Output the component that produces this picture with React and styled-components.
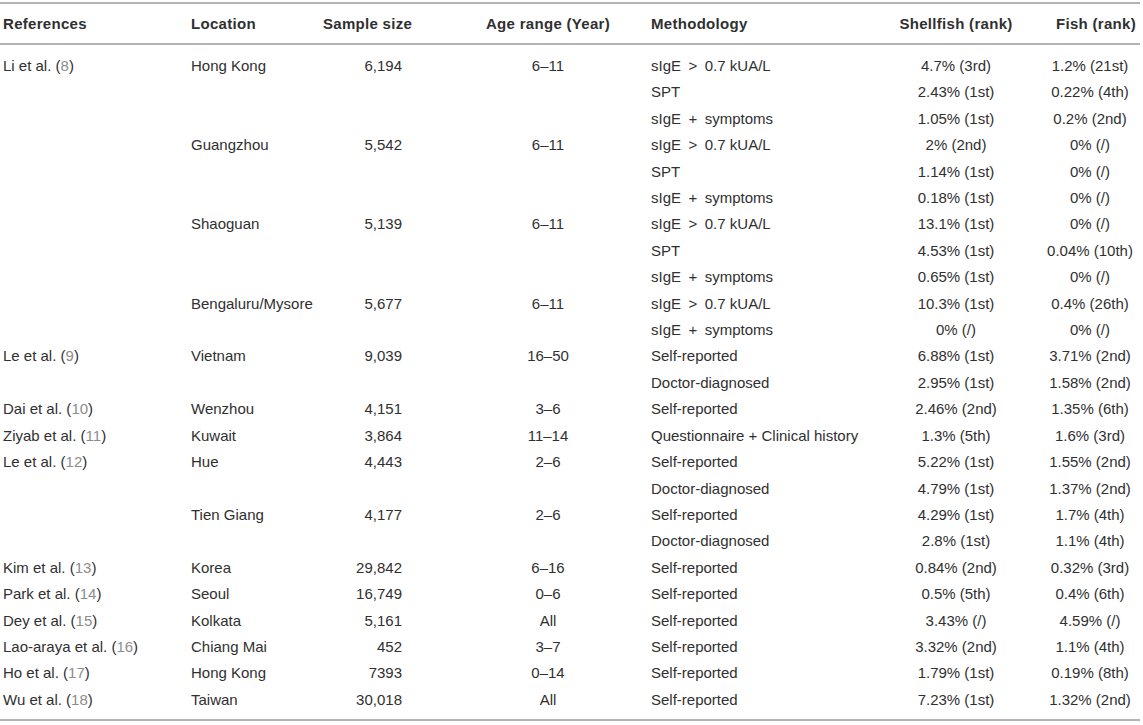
import React from "react";
import styled, { createGlobalStyle } from "styled-components";

const Global = createGlobalStyle`
  html, body { margin: 0; padding: 0; background: #ffffff; }
  body { font-family: "Liberation Sans", Arial, Helvetica, sans-serif; }
`;

const Table = styled.table`
  margin-top: 2px;
  width: 1140px;
  border-collapse: collapse;
  table-layout: fixed;
  border-top: 2px solid #b3b3b3;
  border-bottom: 2px solid #b3b3b3;
  color: #303030;
  font-size: 15px;
`;

const Th = styled.th`
  height: 39px;
  padding: 0 ${(p) => p.$pr || 3}px 0 3px;
  text-align: ${(p) => p.$align || "left"};
  font-weight: bold;
  letter-spacing: 0.3px;
  border-bottom: 2px solid #b3b3b3;
  white-space: nowrap;
  vertical-align: middle;
`;

const Td = styled.td`
  height: 26.4px;
  line-height: 26.4px;
  padding: ${(p) => (p.$first ? 8 : 0)}px ${(p) => p.$pr || 3}px
    ${(p) => (p.$last ? 6 : 0)}px 3px;
  text-align: ${(p) => p.$align || "left"};
  white-space: nowrap;
  vertical-align: top;
`;

const Cite = styled.span`
  color: #8c8c8c;
`;

const cols = [
  { w: 188, align: "left" },
  { w: 132, align: "left" },
  { w: 128, align: "right", pr: 46 },
  { w: 200, align: "center" },
  { w: 224, align: "left" },
  { w: 168, align: "center" },
  { w: 100, align: "center" },
];

const GT = "sIgE\u2002>\u20020.7 kUA/L";
const PS = "sIgE\u2002+\u2002symptoms";

const rows = [
  ["Li et al.", "8", "Hong Kong", "6,194", "6–11", GT, "4.7% (3rd)", "1.2% (21st)"],
  ["", "", "", "", "", "SPT", "2.43% (1st)", "0.22% (4th)"],
  ["", "", "", "", "", PS, "1.05% (1st)", "0.2% (2nd)"],
  ["", "", "Guangzhou", "5,542", "6–11", GT, "2% (2nd)", "0% (/)"],
  ["", "", "", "", "", "SPT", "1.14% (1st)", "0% (/)"],
  ["", "", "", "", "", PS, "0.18% (1st)", "0% (/)"],
  ["", "", "Shaoguan", "5,139", "6–11", GT, "13.1% (1st)", "0% (/)"],
  ["", "", "", "", "", "SPT", "4.53% (1st)", "0.04% (10th)"],
  ["", "", "", "", "", PS, "0.65% (1st)", "0% (/)"],
  ["", "", "Bengaluru/Mysore", "5,677", "6–11", GT, "10.3% (1st)", "0.4% (26th)"],
  ["", "", "", "", "", PS, "0% (/)", "0% (/)"],
  ["Le et al.", "9", "Vietnam", "9,039", "16–50", "Self-reported", "6.88% (1st)", "3.71% (2nd)"],
  ["", "", "", "", "", "Doctor-diagnosed", "2.95% (1st)", "1.58% (2nd)"],
  ["Dai et al.", "10", "Wenzhou", "4,151", "3–6", "Self-reported", "2.46% (2nd)", "1.35% (6th)"],
  ["Ziyab et al.", "11", "Kuwait", "3,864", "11–14", "Questionnaire + Clinical history", "1.3% (5th)", "1.6% (3rd)"],
  ["Le et al.", "12", "Hue", "4,443", "2–6", "Self-reported", "5.22% (1st)", "1.55% (2nd)"],
  ["", "", "", "", "", "Doctor-diagnosed", "4.79% (1st)", "1.37% (2nd)"],
  ["", "", "Tien Giang", "4,177", "2–6", "Self-reported", "4.29% (1st)", "1.7% (4th)"],
  ["", "", "", "", "", "Doctor-diagnosed", "2.8% (1st)", "1.1% (4th)"],
  ["Kim et al.", "13", "Korea", "29,842", "6–16", "Self-reported", "0.84% (2nd)", "0.32% (3rd)"],
  ["Park et al.", "14", "Seoul", "16,749", "0–6", "Self-reported", "0.5% (5th)", "0.4% (6th)"],
  ["Dey et al.", "15", "Kolkata", "5,161", "All", "Self-reported", "3.43% (/)", "4.59% (/)"],
  ["Lao-araya et al.", "16", "Chiang Mai", "452", "3–7", "Self-reported", "3.32% (2nd)", "1.1% (4th)"],
  ["Ho et al.", "17", "Hong Kong", "7393", "0–14", "Self-reported", "1.79% (1st)", "0.19% (8th)"],
  ["Wu et al.", "18", "Taiwan", "30,018", "All", "Self-reported", "7.23% (1st)", "1.32% (2nd)"],
];

const headers = [
  { t: "References" },
  { t: "Location" },
  { t: "Sample size", align: "right", pr: 46 },
  { t: "Age range (Year)", align: "center" },
  { t: "Methodology" },
  { t: "Shellfish (rank)", align: "center" },
  { t: "Fish (rank)", align: "right", pr: 4 },
];

export default function App() {
  return (
    <>
      <Global />
      <Table>
        <colgroup>
          {cols.map((c, i) => (
            <col key={i} style={{ width: c.w }} />
          ))}
        </colgroup>
        <thead>
          <tr>
            {headers.map((h, i) => (
              <Th key={i} $align={h.align} $pr={h.pr}>
                {h.t}
              </Th>
            ))}
          </tr>
        </thead>
        <tbody>
          {rows.map((r, ri) => {
            const first = ri === 0;
            const last = ri === rows.length - 1;
            const cells = [
              r[0] ? (
                <>
                  {r[0]} (<Cite>{r[1]}</Cite>)
                </>
              ) : (
                ""
              ),
              r[2],
              r[3],
              r[4],
              r[5],
              r[6],
              r[7],
            ];
            return (
              <tr key={ri}>
                {cells.map((c, ci) => (
                  <Td
                    key={ci}
                    $first={first}
                    $last={last}
                    $align={cols[ci].align}
                    $pr={cols[ci].pr}
                  >
                    {c}
                  </Td>
                ))}
              </tr>
            );
          })}
        </tbody>
      </Table>
    </>
  );
}
